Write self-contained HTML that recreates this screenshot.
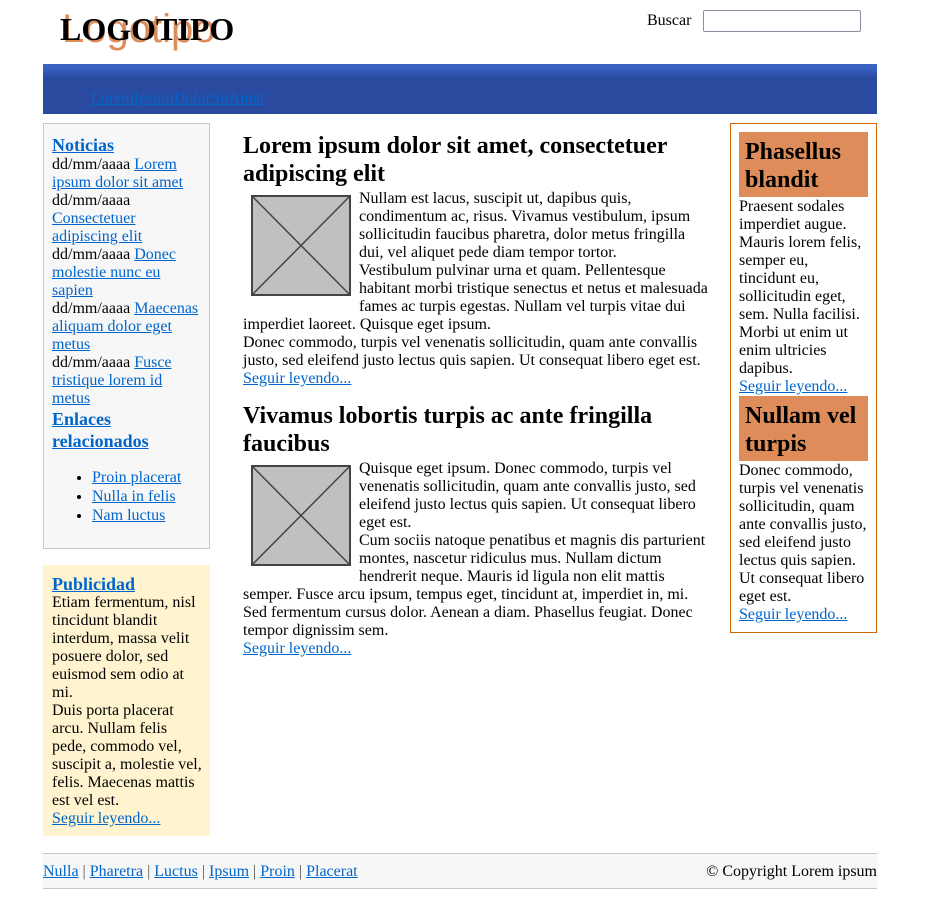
<!DOCTYPE html>
<html><head><meta charset="utf-8"><style>
*{margin:0;padding:0;box-sizing:border-box}
body{width:929px;height:903px;background:#fff;font-family:"Liberation Serif",serif;font-size:16px;line-height:18px;color:#000;position:relative;overflow:hidden}
a{color:#0066cc;text-decoration:underline}
.abs{position:absolute}
.img{float:left;width:100px;height:101px;margin:-1px 8px 4px 8px}
.left h3{font-size:18px;line-height:22px;font-weight:bold}
.right h2{background:#dd8c5a;font-size:24px;line-height:28px;padding:6px 6px 3px;font-weight:bold}
.main h2{font-size:24px;line-height:28px;font-weight:bold}
</style></head><body>
<div class="abs" style="left:62px;top:5px;font-family:'Liberation Sans',sans-serif;font-size:40px;line-height:48px;color:#dd8c5a">Logotipo</div>
<div class="abs" style="left:60px;top:11px;font-size:32px;line-height:36px;font-weight:bold">LOGOTIPO</div>
<div class="abs" style="left:647px;top:12px">Buscar</div>
<div class="abs" style="left:703px;top:10px;width:158px;height:22px;border:1px solid #8e8ea0;border-radius:2px"></div>
<div class="abs" style="left:43px;top:64px;width:834px;height:50px;background:linear-gradient(#3a63c4 0,#3a63c4 3px,#2a4aa0 14px,#2a4aa0 100%)"></div>
<a class="abs" style="left:91px;top:90px" href="#">LoremIpsumDolorSitAmet</a>

<div class="abs left" style="left:43px;top:123px;width:167px;height:426px;background:#f7f7f7;border:1px solid #c8c8c8;padding:10px 0 0 8px">
<h3><a href="#">Noticias</a></h3>
dd/mm/aaaa <a href="#">Lorem<br>ipsum dolor sit amet</a><br>
dd/mm/aaaa<br><a href="#">Consectetuer<br>adipiscing elit</a><br>
dd/mm/aaaa <a href="#">Donec<br>molestie nunc eu<br>sapien</a><br>
dd/mm/aaaa <a href="#">Maecenas<br>aliquam dolor eget<br>metus</a><br>
dd/mm/aaaa <a href="#">Fusce<br>tristique lorem id<br>metus</a>
<h3><a href="#">Enlaces<br>relacionados</a></h3>
<ul style="margin:16px 0 0 40px;line-height:19px">
<li><a href="#">Proin placerat</a></li><li><a href="#">Nulla in felis</a></li><li><a href="#">Nam luctus</a></li></ul>
</div>

<div class="abs left" style="left:43px;top:565px;width:167px;height:271px;background:#fff4cf;padding:9px 0 0 9px">
<h3 style="line-height:20px"><a href="#">Publicidad</a></h3>
Etiam fermentum, nisl<br>tincidunt blandit<br>interdum, massa velit<br>posuere dolor, sed<br>euismod sem odio at<br>mi.<br>Duis porta placerat<br>arcu. Nullam felis<br>pede, commodo vel,<br>suscipit a, molestie vel,<br>felis. Maecenas mattis<br>est vel est.<br><a href="#">Seguir leyendo...</a>
</div>

<div class="abs main" style="left:243px;top:132px;width:480px">
<h2>Lorem ipsum dolor sit amet, consectetuer<br>adipiscing elit</h2>
<div class="img" style="margin-top:7px"><svg width="100" height="101"><rect x="1" y="1" width="98" height="99" fill="#c0c0c0" stroke="#444" stroke-width="2"/><path d="M1 1L99 100M99 1L1 100" stroke="#444" stroke-width="1.5"/></svg></div>
<div style="padding-top:2px">Nullam est lacus, suscipit ut, dapibus quis,<br>condimentum ac, risus. Vivamus vestibulum, ipsum<br>sollicitudin faucibus pharetra, dolor metus fringilla<br>dui, vel aliquet pede diam tempor tortor.<br>Vestibulum pulvinar urna et quam. Pellentesque<br>habitant morbi tristique senectus et netus et malesuada<br>fames ac turpis egestas. Nullam vel turpis vitae dui<br>imperdiet laoreet. Quisque eget ipsum.<br>Donec commodo, turpis vel venenatis sollicitudin, quam ante convallis<br>justo, sed eleifend justo lectus quis sapien. Ut consequat libero eget est.<br><a href="#">Seguir leyendo...</a></div>
<h2 style="margin-top:14px">Vivamus lobortis turpis ac ante fringilla<br>faucibus</h2>
<div class="img" style="margin-top:7px"><svg width="100" height="101"><rect x="1" y="1" width="98" height="99" fill="#c0c0c0" stroke="#444" stroke-width="2"/><path d="M1 1L99 100M99 1L1 100" stroke="#444" stroke-width="1.5"/></svg></div>
<div style="padding-top:2px">Quisque eget ipsum. Donec commodo, turpis vel<br>venenatis sollicitudin, quam ante convallis justo, sed<br>eleifend justo lectus quis sapien. Ut consequat libero<br>eget est.<br>Cum sociis natoque penatibus et magnis dis parturient<br>montes, nascetur ridiculus mus. Nullam dictum<br>hendrerit neque. Mauris id ligula non elit mattis<br>semper. Fusce arcu ipsum, tempus eget, tincidunt at, imperdiet in, mi.<br>Sed fermentum cursus dolor. Aenean a diam. Phasellus feugiat. Donec<br>tempor dignissim sem.<br><a href="#">Seguir leyendo...</a></div>
</div>

<div class="abs right" style="left:730px;top:123px;width:147px;height:510px;border:1px solid #cc6600;padding:8px 8px 0 8px">
<h2>Phasellus<br>blandit</h2>
<div style="padding-top:1px">Praesent sodales<br>imperdiet augue.<br>Mauris lorem felis,<br>semper eu,<br>tincidunt eu,<br>sollicitudin eget,<br>sem. Nulla facilisi.<br>Morbi ut enim ut<br>enim ultricies<br>dapibus.<br><a href="#">Seguir leyendo...</a></div>
<h2>Nullam vel<br>turpis</h2>
<div style="padding-top:1px">Donec commodo,<br>turpis vel venenatis<br>sollicitudin, quam<br>ante convallis justo,<br>sed eleifend justo<br>lectus quis sapien.<br>Ut consequat libero<br>eget est.<br><a href="#">Seguir leyendo...</a></div>
</div>

<div class="abs" style="left:43px;top:853px;width:834px;height:36px;background:#f7f7f7;border-top:1px solid #c8c8c8;border-bottom:1px solid #c8c8c8;padding-top:9px">
<span style="color:#555"><a href="#">Nulla</a> | <a href="#">Pharetra</a> | <a href="#">Luctus</a> | <a href="#">Ipsum</a> | <a href="#">Proin</a> | <a href="#">Placerat</a></span>
<span style="position:absolute;right:0;top:9px">© Copyright Lorem ipsum</span>
</div>
</body></html>
